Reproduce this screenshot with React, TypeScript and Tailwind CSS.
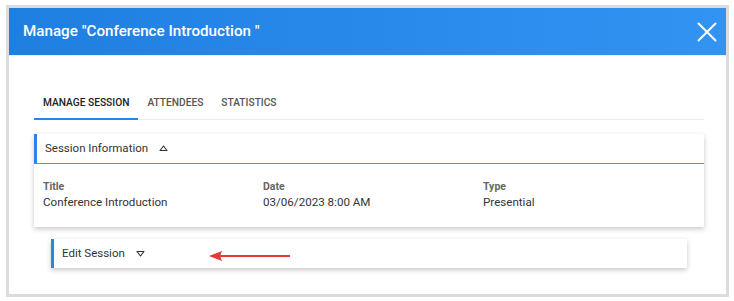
const fields = [
  { label: "Title", value: "Conference Introduction" },
  { label: "Date", value: "03/06/2023 8:00 AM" },
  { label: "Type", value: "Presential" },
];

const tabs = ["Manage Session", "Attendees", "Statistics"];

function Caret({ up }: { up?: boolean }) {
  return (
    <svg width="9" height="7" viewBox="0 0 9 7" className="ml-[11px]">
      <polygon
        points={up ? "4.5,1 8,5.5 1,5.5" : "1,1.5 8,1.5 4.5,6"}
        fill="none"
        stroke="#333"
        strokeWidth="1.1"
        strokeLinejoin="round"
      />
    </svg>
  );
}

export default function App() {
  return (
    <div className="w-[734px] h-[301px] bg-white relative font-['Roboto',sans-serif] pt-[5px] pl-[6px]">
      <div className="w-[723px] h-[292px] border-[3px] border-[#dcdcdc] flex flex-col bg-white">
        {/* Header */}
        <div className="h-[48px] flex items-center justify-between pl-[14px] pr-[9px] bg-gradient-to-r from-[#1f7fe1] to-[#3393f3] border-b border-[#e6eef6]">
          <h1 className="text-white text-[15.2px] font-medium -mt-px">Manage "Conference Introduction "</h1>
          <svg width="20" height="20" viewBox="0 0 20 20">
            <path d="M1.5 1.5 L18.5 18.5 M18.5 1.5 L1.5 18.5" stroke="white" strokeWidth="2" strokeLinecap="round" />
          </svg>
        </div>

        {/* Body */}
        <div className="pl-[25px] pr-[22px] pt-[31px]">
          <div className="flex h-[33px] border-b border-[#ececec]">
            {tabs.map((t, i) => (
              <div
                key={t}
                className={`flex items-center uppercase text-[10.2px] font-medium px-[9px] ${
                  i === 0 ? "text-[#222] border-b-2 border-[#2a86e6] -mb-px" : "text-[#555]"
                }`}
              >
                {t}
              </div>
            ))}
          </div>

          {/* Session Information card */}
          <div className="mt-[14px] bg-white shadow-[0_2px_5px_rgba(0,0,0,0.22)]">
            <div className="h-[30px] flex items-center border-l-[3px] border-[#2a86e6] border-b border-b-[#4a94e0] pl-[8px] text-[11.5px] text-[#333]">
              Session Information
              <Caret up />
            </div>
            <div className="grid grid-cols-3 w-[669px] pl-[9px] pt-[15px] pb-[16px]">
              {fields.map((f) => (
                <div key={f.label} className="flex flex-col">
                  <span className="text-[10.5px] font-bold text-[#666] leading-[15px]">{f.label}</span>
                  <span className="text-[11.6px] text-[#333] leading-[17px]">{f.value}</span>
                </div>
              ))}
            </div>
          </div>

          {/* Edit Session card */}
          <div className="mt-[12px] mx-[17px] h-[29px] flex items-center bg-white border-l-[3px] border-[#2a86e6] pl-[8px] text-[11.5px] text-[#333] shadow-[0_2px_5px_rgba(0,0,0,0.22)]">
            Edit Session
            <Caret />
          </div>
        </div>
      </div>

      {/* Annotation arrow */}
      <svg className="absolute left-[206px] top-[249px]" width="88" height="14" viewBox="0 0 88 14">
        <line x1="12" y1="7" x2="84" y2="7" stroke="#e53a3a" strokeWidth="2.2" />
        <polygon points="3,7 16,2 14,7 16,12" fill="#e53a3a" />
      </svg>
    </div>
  );
}
